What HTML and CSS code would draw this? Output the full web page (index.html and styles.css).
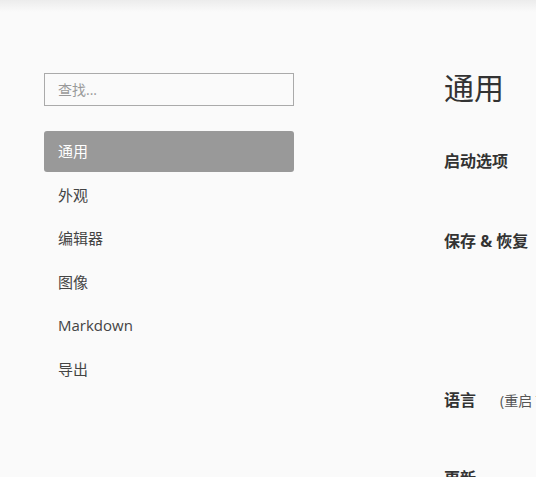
FILE: index.html
```html
<!DOCTYPE html>
<html lang="zh-CN">
<head>
<meta charset="utf-8">
<title>偏好设置</title>
<link rel="stylesheet" href="styles.css">
</head>
<body>
<div class="topshade"></div>
<div class="page">
  <aside class="sidebar">
    <input class="search" type="text" placeholder="查找...">
    <nav class="menu">
      <div class="menu-item active">通用</div>
      <div class="menu-item">外观</div>
      <div class="menu-item">编辑器</div>
      <div class="menu-item">图像</div>
      <div class="menu-item">Markdown</div>
      <div class="menu-item">导出</div>
    </nav>
  </aside>
  <main class="content">
    <h1 class="title">通用</h1>
    <section class="section sec-startup">
      <h2 class="label">启动选项</h2>
    </section>
    <section class="section sec-save">
      <h2 class="label">保存 &amp; 恢复</h2>
    </section>
    <section class="section sec-lang">
      <h2 class="label">语言</h2>
      <span class="note">(重启 Typora 后生效)</span>
    </section>
    <section class="section sec-update">
      <h2 class="label">更新</h2>
    </section>
  </main>
</div>
</body>
</html>
```
FILE: styles.css
```css
html, body {
  margin: 0;
  padding: 0;
  background: #fafafa;
  overflow: hidden;
  height: 477px;
  font-family: "Open Sans", "Noto Sans CJK SC", sans-serif;
  color: #333;
}
.topshade {
  position: absolute;
  left: 0; right: 0; top: 0;
  height: 12px;
  background: linear-gradient(#ececec, #fafafa);
}
.page {
  display: flex;
  width: 900px;
}
.sidebar {
  width: 250px;
  flex: none;
  padding: 73px 0 0 44px;
}
.search {
  display: block;
  box-sizing: border-box;
  width: 250px;
  height: 33px;
  margin: 0;
  border: 1px solid #aaa;
  background: #fafafa;
  padding: 0 13px;
  font-family: "Open Sans", "Noto Sans CJK SC", sans-serif;
  font-size: 14px;
  color: #333;
  outline: none;
}
.search::placeholder { color: #999; }
.menu {
  margin-top: 25px;
  display: flex;
  flex-direction: column;
}
.menu-item {
  height: 41px;
  line-height: 41px;
  margin-bottom: 2.5px;
  padding-left: 14px;
  font-size: 15px;
  color: #444;
  border-radius: 3px;
}
.menu-item.active {
  background: #999;
  color: #fff;
}
.content {
  margin-left: 150px;
  padding-top: 66px;
  flex: none;
  width: 400px;
}
.title {
  margin: 0;
  font-size: 30px;
  font-weight: normal;
  line-height: 44px;
  color: #333;
}
.section {
  display: flex;
  align-items: baseline;
  white-space: nowrap;
}
.label {
  margin: 0;
  font-size: 16px;
  font-weight: bold;
  line-height: 24px;
  color: #333;
  white-space: nowrap;
}
.note {
  margin-left: 24px;
  font-size: 14px;
  color: #555;
}
.sec-startup { margin-top: 39px; }
.sec-save { margin-top: 56px; }
.sec-lang { margin-top: 135px; }
.sec-update { margin-top: 54px; }
```
